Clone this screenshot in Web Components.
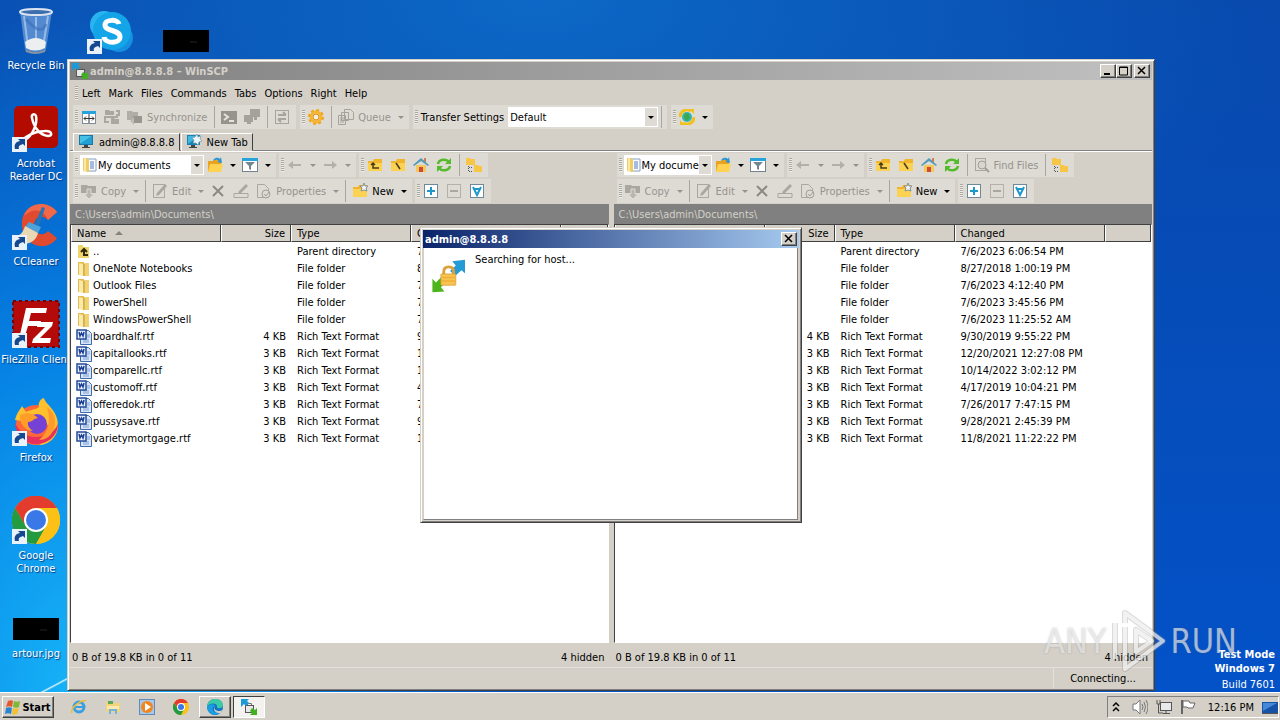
<!DOCTYPE html>
<html lang="en">
<head>
<meta charset="utf-8">
<title>admin@8.8.8.8 – WinSCP</title>
<style>
    html, body {
        height: 100%;
        margin: 0;
        overflow: hidden;
    }

    body {
        font: 11px/13px "DejaVu Sans Condensed", "DejaVu Sans", sans-serif;
        color: #000;
        --face: #d4d0c8;
        --tool: #dedbd5;
        --off: #96938c;
    }
</style>
</head>
<body>
<win-desktop></win-desktop>

<script>
const folder = '<path d="M1 4h5l1-2h8v12H1z" fill="#f0b52c"/><path d="M1 6h14v8H1z" fill="#fcd253"/>';
const shortcut = '<rect x="0" y="33" width="15" height="15" fill="#e9f2fa"/><path d="M3 45c-1-4 0-7 5-8l-2-2h7v7l-2-2c-3 1-5 2-4 5z" fill="#14488f"/>';

const icons = {
    winscp: '<rect x="4.500" y="6.500" width="8" height="7" fill="#e8e8e8" stroke="#555"/><path d="M6.500 6V4.500h4V6" fill="none" stroke="#777"/><path d="M0 0h8L6 2l2 2-3 3-2-2-3 3z" fill="#1c9bd8"/><path d="M16 16H9l2-2-2-2 2-3 3 2 2-2z" fill="#3eb021"/>',
    layout: '<rect x="1.500" y="2.500" width="13" height="12" fill="#fff" stroke="#7f8c96"/><path d="M1 2h14v3H1z" fill="#25a3dc"/><path d="M8 5v9M3 9.500h10M5 7.500l-2 2 2 2M11 7.500l2 2-2 2" fill="none" stroke="#333"/>',
    compare: '<path d="M1 1h4l1 1h4v4H1zM7 9h3l1 1h4v5H7z" fill="#aaa79f"/><path d="M12 2h3v4h-3M4 8H1v5h4M3 8h11" fill="none" stroke="#aaa79f" stroke-width="2"/>',
    sync: '<path d="M0 2h5l1 1h5v8H0z" fill="#b1aea7"/><path d="M6 7h9v7H5z" fill="#99968f"/><path d="M3 12l4-4v8z" fill="#bfbcb5"/>',
    console: '<rect y="2" width="16" height="13" fill="#96938c"/><path d="M3 5l4 3-4 3M8 12h5" fill="none" stroke="#e5e2dc" stroke-width="2"/>',
    hosts: '<path d="M6 0h10v8H6zM0 6h9v7H0zM3 13h4v2H3zM10 8h3v3h-3z" fill="#a5a29a"/>',
    swap: '<rect x="1.500" y="1.500" width="13" height="13" fill="none" stroke="#a7a49d"/><path d="M4 6h8M9 3l3 3M12 10H4M7 13l-3-3" fill="none" stroke="#a7a49d" stroke-width="2"/>',
    gear: '<circle cx="8" cy="8" r="5" fill="none" stroke="#f6b52e" stroke-width="3"/><circle cx="8" cy="8" r="7" fill="none" stroke="#f0a51c" stroke-width="2" stroke-dasharray="3 2.500"/><circle cx="8" cy="8" r="3" fill="#f8efd8" stroke="#d98f12"/>',
    queue: '<path d="M6.500.5h6l3 3v7h-9zM3.500 3.500h7v8h-7zM.5 6.500h7v9h-7z" fill="#dedbd5" stroke="#a5a29a"/><path d="M2 9h4M2 11h4M2 13h4" stroke="#a5a29a"/>',
    globe: '<circle cx="8" cy="8" r="5" fill="#2fb8b4"/><path d="M6 4l4 1 1 4-3 3-3-3z" fill="#3fa84a"/><path d="M1 8a7 7 0 0 1 11-6M15 8a7 7 0 0 1-11 6" fill="none" stroke="#f3c11f" stroke-width="3"/><path d="M10 0h5v5zM6 16H1v-5z" fill="#f3c11f"/>',
    monitor: '<rect x="1" y="1" width="14" height="10" fill="#1678ab"/><path d="M2 2h12L2 10z" fill="#48c0e6"/><path d="M2 10L14 2v8z" fill="#22a0d2"/><path d="M6 11h4v2h2v1H4v-1h2z" fill="#444"/>',
    newtab: '<rect x="1" y="1" width="13" height="10" fill="#1984b8"/><path d="M2 2h11L2 10z" fill="#3fb8e0"/><path d="M5 11h4v2h2v1H3v-1h2z" fill="#444"/><path d="M11 0l1 3 3-1-1 3 2 2-3 1-1 3-2-2-3 0 1-3-2-2 3-1z" fill="#e9f5fb" stroke="#7999a8" stroke-width=".7"/>',
    docs: '<path d="M5 2h9v12H5z" fill="#fbfcff" stroke="#84a0c0"/><path d="M8 5h4M8 7h4M8 9h4M8 11h4" stroke="#4e7dc3"/><path d="M1 1h4l2 2v12l-6-1z" fill="#f0cc66"/><path d="M3 1v13" stroke="#fae9a6" stroke-width="2"/>',
    open: '<path d="M1 4h5l1-1h7v11H1z" fill="#e8a41f"/><path d="M3 7h13l-2 8H1z" fill="#ffd252"/><path d="M6 4c1-4 5-4 7-2l1-2 1 6-5-1 2-1c-2-2-4-1-6 0z" fill="#2b94cf"/>',
    filter: '<rect x=".5" y="1.500" width="15" height="13" fill="#fff" stroke="#73828c"/><path d="M0 1h16v3H0z" fill="#26a3da"/><path d="M3 5h10L9 9v4l-2-1V9z" fill="#75858f"/>',
    back: '<path d="M1 8l5-4v3h8v2H6v3z" fill="#b3b0a9"/>',
    forward: '<path d="M15 8l-5-4v3H2v2h8v3z" fill="#b3b0a9"/>',
    up: folder + '<path d="M4 8l2-2 2 2M6 6v5h6" fill="none" stroke="#493a18" stroke-width="1.500"/>',
    root: folder + '<path d="M6 6l4 6" stroke="#493a18" stroke-width="1.500"/>',
    home: '<path d="M3 8h10v7H3z" fill="#f3c85c"/><path d="M11 1h2v4h-2z" fill="#d77b50"/><path d="M0 8l8-7 8 7-1 1-7-5-7 5z" fill="#4f9bb8"/><path d="M6 10h4v5H6z" fill="#cf4a32"/>',
    refresh: '<path d="M2 7a6 5 0 0 1 11-2M14 9a6 5 0 0 1-11 2" fill="none" stroke="#55bb2c" stroke-width="2.500"/><path d="M15 1v6H9zM1 15V9h6z" fill="#55bb2c"/>',
    tree: '<path d="M0 1h4l1 1h4v6H0zM8 8h4l1 1h4v6H8z" fill="#f8c646"/><path d="M2.500 9v6M3 14.500h4M3 10.500h4" stroke="#555" stroke-dasharray="1 1"/>',
    find: '<rect x="1.500" y="1.500" width="10" height="12" fill="none" stroke="#aaa79f"/><circle cx="8" cy="8" r="4" fill="#d9d6d0" stroke="#a09d96"/><path d="M11 11l4 4" stroke="#a09d96" stroke-width="2"/>',
    copy: '<path d="M0 2h6l1 1h8v7H0z" fill="#aaa79f"/><path d="M6 6h4v5h3l-5 5-5-5h3z" fill="#b9b6af" stroke="#dedbd5"/>',
    edit: '<rect x="1.500" y="1.500" width="11" height="13" fill="none" stroke="#aaa79f"/><path d="M4 13l1-3 8-9 2 2-8 9z" fill="#aaa79f"/>',
    remove: '<path d="M3 3l10 10M13 3L3 13" stroke="#8d8a83" stroke-width="2"/>',
    rename: '<path d="M1 10.500h14v4H1z" fill="none" stroke="#aaa79f"/><path d="M5 11l1-3 7-7 2 2-7 7z" fill="#aaa79f"/>',
    props: '<path d="M1.500 1.500h7l4 4v9h-11z" fill="none" stroke="#aaa79f"/><circle cx="10" cy="11" r="4" fill="#dedbd5" stroke="#a09d96"/><path d="M8 11l2 2 3-4" fill="none" stroke="#a09d96"/>',
    newfolder: folder + '<path d="M12 0l1 3 3 0-2 2 1 3-3-1-3 1 1-3-2-2h3z" fill="#eef4fa" stroke="#71808c" stroke-width=".8"/>',
    plus: '<rect x="1.500" y="1.500" width="13" height="13" fill="#fff" stroke="#708998"/><path d="M4 8h8M8 4v8" stroke="#1b98cd" stroke-width="2"/>',
    minus: '<rect x="1.500" y="1.500" width="13" height="13" fill="none" stroke="#b4b1aa"/><path d="M4 8h8" stroke="#aaa79f" stroke-width="2"/>',
    vee: '<rect x="1.500" y="1.500" width="13" height="13" fill="#fff" stroke="#708998"/><path d="M4 4l4 8 4-8M5 6h6" fill="none" stroke="#1b98cd" stroke-width="2"/>',
    parent: '<path d="M2 1h5v2h6v11H2z" fill="#efd56c"/><path d="M5 8l3-3 3 3M8 5v6h4" fill="none" stroke="#2f2a10" stroke-width="2"/>',
    dir: '<path d="M2 1h6v13H2z" fill="#e2bb4c"/><path d="M8 2h5v13H7z" fill="#f1d273"/><path d="M3 2l4 1v12l-4-1z" fill="#faeaa9"/><path d="M8 3v12" stroke="#c39a32"/>',
    rtf: '<path d="M4.500 1.500h8l3 3v11h-11z" fill="#d7e6fa" stroke="#3f68ad"/><path d="M7 11h6M7 13h6M11 6h3M11 8h3" stroke="#7e9fd2"/><rect x="1" y="1" width="9" height="9" fill="#eaf2ff" stroke="#234a97" stroke-width="1.500"/><path d="M3 3l1 4 1.500-3L7 7l1-4" fill="none" stroke="#1d3f91" stroke-width="1.500"/>',
    ie: '<circle cx="8" cy="8" r="5" fill="none" stroke="#3a9fe0" stroke-width="3"/><path d="M4 8h9" stroke="#3a9fe0" stroke-width="2"/><path d="M1 14C-1 9 10 0 15 2" fill="none" stroke="#e8bf3c" stroke-width="1.500"/>',
    explorer: '<path d="M1 3h5l1 1h8v9H1z" fill="#f2d47a"/><path d="M3 2h5v3H3z" fill="#58a95a"/><path d="M2 7h12v3H2z" fill="#fbeab0"/><path d="M4 15v-5h8v5h-2v-3H6v3z" fill="#71b4df"/>',
    player: '<rect x=".5" y=".5" width="15" height="15" fill="#a9c7e4" stroke="#5f8cba"/><circle cx="8" cy="8" r="6" fill="#f0861d"/><path d="M6 4l6 4-6 4z" fill="#fff"/>',
    chrome: '<circle cx="8" cy="8" r="8" fill="#fbc116"/><path d="M1 4a8 8 0 0 1 14 0H8L5 9z" fill="#e33b2e"/><path d="M1 4a8 8 0 0 0 7 12l3-6-5 1z" fill="#249a41"/><circle cx="8" cy="8" r="4" fill="#fff"/><circle cx="8" cy="8" r="3" fill="#3b78e7"/>',
    edge: '<circle cx="8" cy="8" r="8" fill="#1373c6"/><path d="M0 8C1-3 16-2 16 6c0 4-6 4-6 2 1-4-7-5-10 0z" fill="#3cc9a5"/><path d="M0 8c3-4 8-3 8-1-5 2-2 8 6 6-5 5-13 3-14-5z" fill="#1b9de2"/><path d="M8 7c-2 3 1 5 5 5l2-1-1 3c-5 1-9-3-6-7z" fill="#d4d0c8"/>',
    flag7: '<path d="M3 2c2-1 4-1 5 0L7 8C5 7 3 7 1 8z" fill="#e5572d"/><path d="M9 2c2 1 4 1 6 0l-1 6c-2 1-4 1-6 0z" fill="#7db934"/><path d="M1 9c2-1 4-1 6 0l-1 6c-2-1-4-1-6 0z" fill="#2a83cf"/><path d="M8 9c2 1 4 1 6 0l-2 6c-2 1-4 1-5 0z" fill="#f5c12b"/>',
    more: '<path d="M5 7l3-3 3 3M5 12l3-3 3 3" fill="none" stroke="#000" stroke-width="1.500"/>',
    sound: '<path d="M1 5h3l4-4v14l-4-4H1z" fill="#fff" stroke="#777"/><path d="M10 5q2 3 0 6M12 3q3 5 0 10M14 1q4 7 0 14" fill="none" stroke="#777"/>',
    network: '<rect x="4.500" y="3.500" width="11" height="8" fill="#e9e9e9" stroke="#555"/><path d="M7 14.500h7M10 12v2M1 1v4h3V1M2.500 5v9H7" fill="none" stroke="#555"/>',
    flag: '<path d="M2 1v14" stroke="#666" stroke-width="2"/><path d="M3 2h6l1 2h5l-2 5H8L7 8H3z" fill="#fff" stroke="#666"/>',
    show: '<rect x="0" y="3" width="16" height="11" fill="#1652a6"/><path d="M1 4h14L1 12z" fill="#4788d8"/><path d="M0 14h16v1H0z" fill="#555"/>'
};

// 48px artwork for the desktop and the progress dialog
const pictures = {
    bin: '<path d="M8 5l5 38q11 6 21 0l6-38z" fill="#8fb6e6" fill-opacity=".55"/><path d="M12 10l4 31M36 10l-5 31M24 11v32" stroke="#dceafb" stroke-opacity=".5" stroke-width="2"/><path d="M13 36q11-8 21 0l-1 6q-10 5-19 0z" fill="#eceef0"/><path d="M13 43q11 6 21 0l-1 3q-10 4-19 0z" fill="#8693a0"/><ellipse cx="24" cy="6" rx="16" ry="3" fill="#3c6fae" stroke="#dbe4ef" stroke-width="2"/><path d="M14 13q15 18 20 5" fill="none" stroke="#396fb8" stroke-opacity=".6" stroke-width="3"/>',
    acrobat: '<rect x="2" y="2" width="44" height="42" rx="5" fill="#b30b00"/><path d="M13 36c6-3 13-15 11-24-1-3-5-2-4 2 2 10 8 17 16 18 5 0 4-5-2-5-9 0-14 2-20 6-4 3-4 5-1 3z" fill="none" stroke="#fff" stroke-width="2.500"/>' + shortcut,
    ccleaner: '<path d="M45 10C36-2 8 0 10 24c2 22 26 26 35 12l-9-7c-5 6-14 3-14-5 0-10 9-12 14-6z" fill="#e04a2e"/><path d="M45 10C36-2 16 0 12 14c8-8 19-8 24 4z" fill="#f2694a"/><path d="M30 5l3 1-6 18-4-2z" fill="#2573b8"/><path d="M17 20l12 5-3 6-13-6z" fill="#4ea2d9"/><path d="M13 24l13 7c-2 9-10 12-20 11L2 34c7 0 9-4 11-10z" fill="#ead8b5"/>' + shortcut,
    filezilla: '<rect x="1" y="1" width="46" height="46" fill="#b40a0a" stroke="#700" stroke-width="2" stroke-dasharray="3 3"/><path d="M14 8h21l-1 5H19l-2 8h12l-1 5H16l-4 13H7z" fill="#fff"/><path d="M26 22h15l-1 4-12 12h11l-1 5H20l1-4 12-12h-8z" fill="#fff"/>' + shortcut,
    firefox: '<circle cx="24" cy="27" r="20" fill="#ff6638"/><path d="M3 22C5 14 8 12 10 8l4 6c6-3 9-2 13-5-1-4 1-8 5-9 1 6 14 12 14 27 0 12-9 20-19 20 9-4 13-11 11-20z" fill="#ffc02e"/><path d="M46 25c0 14-11 21-22 21S4 38 3 25c4 8 10 14 21 14s20-6 22-14z" fill="#e62f5c"/><path d="M35 9c8 6 10 14 6 24-3 6-8 9-14 9 10-8 12-20 8-33z" fill="#ff9a2d"/><circle cx="25" cy="26" r="10" fill="#7542d5"/><path d="M8 17c7-3 13-2 18 3-6 1-5 4-10 4-1 4 2 7 5 9-8 0-14-8-13-16z" fill="#ff9d29"/>' + shortcut,
    chrome: '<circle cx="24" cy="24" r="24" fill="#fbc116"/><path d="M3 12a24 24 0 0 1 42 0H24L13 29z" fill="#e33b2e"/><path d="M3 12a24 24 0 0 0 21 36l11-18-20 2z" fill="#249a41"/><path d="M24 48l10-18 1-18h10a24 24 0 0 1-21 36z" fill="#fbc116"/><circle cx="24" cy="24" r="12" fill="#fff"/><circle cx="24" cy="24" r="10" fill="#3b78e7"/>' + shortcut,
    skype: '<circle cx="17" cy="19" r="14" fill="#29b4ef"/><circle cx="32" cy="32" r="14" fill="#158fe0"/><circle cx="25" cy="25" r="19" fill="#14a5e8"/><path d="M32 18c-1-5-14-5-14 1 0 7 15 4 15 12 0 7-15 7-16 0" fill="none" stroke="#fff" stroke-width="5"/>' + shortcut,
    thumb: '<path d="M1 24h46v22H1z"/><path d="M28 36h7" stroke="#222"/>',
    transfer: '<path d="M48 1v19l-5-4-9 8-7-7 8-8-5-6z" fill="#249bd4"/><path d="M2 47V28l5 5 8-8 7 7-8 8 5 6z" fill="#4cb51d"/><path d="M18 22v-4q0-7 7-7t7 7v4" fill="none" stroke="#d9a23a" stroke-width="4"/><rect x="14" y="21" width="21" height="16" rx="1" fill="#f8c451" stroke="#d9962a"/><path d="M15 26h19M15 31h19" stroke="#f0ae37" stroke-width="2"/>'
};

class UiIcon extends HTMLElement {
    connectedCallback() {
        const name = this.getAttribute('name');
        const big = this.hasAttribute('picture');
        const box = big ? 48 : 16;
        this.attachShadow({mode: 'open'}).innerHTML = `
            <style>
                :host { display: block; flex: none; width: 16px; height: 16px; }
                svg { display: block; width: 100%; height: 100%; }
            </style>
            <svg viewBox="0 0 ${box} ${box}" aria-hidden="true">${(big ? pictures : icons)[name]}</svg>`;
    }
}

class DesktopIcon extends HTMLElement {
    connectedCallback() {
        this.attachShadow({mode: 'open'}).innerHTML = `
            <style>
                :host {
                    display: flex;
                    flex-direction: column;
                    align-items: center;
                    gap: 5px;
                    height: 98px;
                    color: #fff;
                    text-align: center;
                    text-shadow: 1px 1px 1px #003a80;
                    white-space: nowrap;
                }
                ui-icon { width: 48px; height: 48px; }
            </style>
            <ui-icon picture name="${this.getAttribute('name')}"></ui-icon>
            <slot></slot>`;
    }
}

class ToolButton extends HTMLElement {
    connectedCallback() {
        const icon = this.getAttribute('icon');
        const off = this.hasAttribute('off');
        this.attachShadow({mode: 'open'}).innerHTML = `
            <style>
                :host { display: block; }
                button {
                    display: flex;
                    align-items: center;
                    height: 24px;
                    padding: 0;
                    border: 0;
                    background: none;
                    font: inherit;
                    color: #000;
                    white-space: nowrap;
                }
                button:disabled { color: var(--off); }
                ui-icon { margin: 0 4px 0 3px; }
                .label { padding-right: 4px; }
                .menu { width: 12px; display: flex; justify-content: center; }
                .menu::after {
                    content: "";
                    border: 3px solid transparent;
                    border-top-color: currentColor;
                    border-bottom: 0;
                }
            </style>
            <button type="button" aria-label="${this.getAttribute('label') || icon}" ${off ? 'disabled' : ''}>
                <ui-icon name="${icon}"></ui-icon>
                ${this.hasAttribute('label') ? `<span class="label">${this.getAttribute('label')}</span>` : ''}
                ${this.hasAttribute('menu') ? '<span class="menu"></span>' : ''}
            </button>`;
    }
}

class ToolBar extends HTMLElement {
    connectedCallback() {
        this.attachShadow({mode: 'open'}).innerHTML = `
            <style>
                :host {
                    display: flex;
                    align-items: center;
                    height: 24px;
                    padding-right: 2px;
                    background: var(--tool);
                }
                .grip {
                    width: 3px;
                    height: 14px;
                    margin-left: 2px;
                    background: repeating-linear-gradient(#aaa79f 0 1px, #efedea 1px 2px);
                }
                ::slotted(hr) {
                    width: 1px;
                    height: 22px;
                    margin: 0 3px;
                    border: 0;
                    background: #a9a69f;
                }
            </style>
            <span class="grip"></span>
            <slot></slot>`;
    }
}

class ComboBox extends HTMLElement {
    connectedCallback() {
        const icon = this.getAttribute('icon');
        this.attachShadow({mode: 'open'}).innerHTML = `
            <style>
                :host {
                    display: flex;
                    align-items: center;
                    box-sizing: border-box;
                    height: 20px;
                    margin-left: 2px;
                    padding-left: 1px;
                    border: 1px solid #fff;
                    background: #fff;
                }
                select {
                    flex: 1;
                    min-width: 0;
                    height: 18px;
                    padding: 0;
                    border: 0;
                    appearance: none;
                    background: none;
                    font: inherit;
                    color: #000;
                }
                .drop {
                    display: flex;
                    align-items: center;
                    justify-content: center;
                    width: 12px;
                    height: 18px;
                    background: var(--tool);
                }
                .drop::after {
                    content: "";
                    border: 3px solid transparent;
                    border-top-color: #000;
                    border-bottom: 0;
                }
            </style>
            ${icon ? `<ui-icon name="${icon}"></ui-icon>` : ''}
            <select aria-label="${this.getAttribute('label')}"><option>${this.getAttribute('value')}</option></select>
            <span class="drop"></span>`;
    }
}

class WinButton extends HTMLElement {
    connectedCallback() {
        const shapes = {
            minimize: '<path d="M3 8h6v2H3z"/>',
            maximize: '<path d="M2.500 2h8v8h-8zM2 2.500h9" fill="none" stroke="#000"/>',
            close: '<path d="M3 2l7 7M10 2L3 9" fill="none" stroke="#000" stroke-width="1.500"/>'
        };
        const kind = this.getAttribute('kind');
        this.attachShadow({mode: 'open'}).innerHTML = `
            <style>
                :host { display: block; }
                button {
                    display: block;
                    width: 16px;
                    height: 14px;
                    padding: 0;
                    border: 1px solid;
                    border-color: #fff #404040 #404040 #fff;
                    box-shadow: inset -1px -1px #808080;
                    background: var(--face);
                }
                svg { display: block; width: 13px; height: 12px; }
            </style>
            <button type="button" aria-label="${kind}"><svg viewBox="0 0 13 12">${shapes[kind]}</svg></button>`;
    }
}

class WinFrame extends HTMLElement {
    connectedCallback() {
        this.attachShadow({mode: 'open'}).innerHTML = `
            <style>
                :host {
                    display: flex;
                    flex-direction: column;
                    box-sizing: border-box;
                    padding: 2px;
                    border: 1px solid;
                    border-color: #d4d0c8 #404040 #404040 #d4d0c8;
                    box-shadow: inset 1px 1px #fff, inset -1px -1px #808080;
                    background: var(--face);
                }
                header {
                    display: flex;
                    align-items: center;
                    flex: none;
                    gap: 2px;
                    height: 18px;
                    padding: 0 2px;
                    background: linear-gradient(90deg, var(--bar-from), var(--bar-to));
                    color: var(--bar-text);
                }
                h1 { flex: 1; margin: 0; font: inherit; font-weight: bold; }
                .buttons { display: flex; }
                win-button[kind=close] { margin-left: 2px; }
            </style>
            <header>
                <slot name="icon"></slot>
                <h1>${this.getAttribute('caption')}</h1>
                <div class="buttons">
                    ${this.getAttribute('buttons').split(' ').map(kind => `<win-button kind="${kind}"></win-button>`).join('')}
                </div>
            </header>
            <slot></slot>`;
    }
}

const files = [
    ['parent', '..', '', 'Parent directory', '7/6/2023 6:06:54 PM'],
    ['dir', 'OneNote Notebooks', '', 'File folder', '8/27/2018 1:00:19 PM'],
    ['dir', 'Outlook Files', '', 'File folder', '7/6/2023 4:12:40 PM'],
    ['dir', 'PowerShell', '', 'File folder', '7/6/2023 3:45:56 PM'],
    ['dir', 'WindowsPowerShell', '', 'File folder', '7/6/2023 11:25:52 AM'],
    ['rtf', 'boardhalf.rtf', '4 KB', 'Rich Text Format', '9/30/2019 9:55:22 PM'],
    ['rtf', 'capitallooks.rtf', '3 KB', 'Rich Text Format', '12/20/2021 12:27:08 PM'],
    ['rtf', 'comparellc.rtf', '3 KB', 'Rich Text Format', '10/14/2022 3:02:12 PM'],
    ['rtf', 'customoff.rtf', '3 KB', 'Rich Text Format', '4/17/2019 10:04:21 PM'],
    ['rtf', 'offeredok.rtf', '3 KB', 'Rich Text Format', '7/26/2017 7:47:15 PM'],
    ['rtf', 'pussysave.rtf', '3 KB', 'Rich Text Format', '9/28/2021 2:45:39 PM'],
    ['rtf', 'varietymortgage.rtf', '3 KB', 'Rich Text Format', '11/8/2021 11:22:22 PM']
];

class FileTable extends HTMLElement {
    connectedCallback() {
        this.attachShadow({mode: 'open'}).innerHTML = `
            <style>
                :host {
                    display: block;
                    overflow: hidden;
                    border: 1px solid;
                    border-color: #404040 #fff #fff #404040;
                    background: #fff;
                }
                table { width: 100%; table-layout: fixed; border-collapse: separate; border-spacing: 0; }
                th {
                    height: 16px;
                    padding: 0 5px;
                    border: 1px solid;
                    border-color: #fff #404040 #404040 #fff;
                    border-top: 0;
                    background: var(--face);
                    font-weight: normal;
                    text-align: left;
                }
                td { height: 17px; padding: 0 0 0 6px; white-space: nowrap; }
                tbody::before { content: ""; display: block; height: 1px; }
                .size { padding: 0 5px 0 0; text-align: right; }
                .file { display: flex; align-items: center; gap: 1px; margin-left: -1px; height: 17px; }
                .sort {
                    display: inline-block;
                    margin-left: 6px;
                    vertical-align: 2px;
                    border: 4px solid transparent;
                    border-bottom-color: #86837c;
                    border-top: 0;
                }
            </style>
            <table>
                <colgroup><col width="150"><col width="70"><col width="120"><col width="150"><col></colgroup>
                <thead>
                    <tr><th>Name <i class="sort"></i></th><th class="size">Size</th><th>Type</th><th>Changed</th><th></th></tr>
                </thead>
                <tbody>
                    ${files.map(([icon, name, size, type, changed]) => `
                    <tr>
                        <td><div class="file"><ui-icon name="${icon}"></ui-icon><span>${name}</span></div></td>
                        <td class="size">${size}</td>
                        <td>${type}</td>
                        <td>${changed}</td>
                        <td></td>
                    </tr>`).join('')}
                </tbody>
            </table>`;
    }
}

class FilePanel extends HTMLElement {
    connectedCallback() {
        const find = this.hasAttribute('find');
        this.attachShadow({mode: 'open'}).innerHTML = `
            <style>
                :host { display: flex; flex-direction: column; flex: 1; min-width: 0; }
                .bars { display: flex; gap: 3px; padding: 1px 0 1px 3px; }
                combo-box { width: ${find ? 88 : 124}px; }
                .path {
                    height: 20px;
                    padding: 0 5px;
                    background: #808080;
                    color: #d4d0c8;
                    line-height: 21px;
                }
                file-table { flex: 1; min-height: 0; }
                footer { display: flex; justify-content: space-between; padding: 8px 4px 3px 2px; }
            </style>
            <div class="bars">
                <tool-bar>
                    <combo-box icon="docs" label="Drive" value="My documents"></combo-box>
                    <tool-button icon="open" menu></tool-button>
                    <tool-button icon="filter" menu></tool-button>
                </tool-bar>
                <tool-bar>
                    <tool-button icon="back" off menu></tool-button>
                    <tool-button icon="forward" off menu></tool-button>
                </tool-bar>
                <tool-bar>
                    <tool-button icon="up"></tool-button>
                    <tool-button icon="root"></tool-button>
                    <tool-button icon="home"></tool-button>
                    <tool-button icon="refresh"></tool-button>
                    <hr>
                    ${find ? '<tool-button icon="find" label="Find Files" off></tool-button><hr>' : ''}
                    <tool-button icon="tree"></tool-button>
                </tool-bar>
            </div>
            <div class="bars">
                <tool-bar>
                    <tool-button icon="copy" label="Copy" off menu></tool-button>
                    <hr>
                    <tool-button icon="edit" label="Edit" off menu></tool-button>
                    <tool-button icon="remove" off></tool-button>
                    <tool-button icon="rename" off></tool-button>
                    <tool-button icon="props" label="Properties" off menu></tool-button>
                    <hr>
                    <tool-button icon="newfolder" label="New" menu></tool-button>
                </tool-bar>
                <tool-bar>
                    <tool-button icon="plus"></tool-button>
                    <tool-button icon="minus" off></tool-button>
                    <tool-button icon="vee"></tool-button>
                </tool-bar>
            </div>
            <div class="path">C:\\Users\\admin\\Documents\\</div>
            <file-table></file-table>
            <footer><span>0 B of 19.8 KB in 0 of 11</span><span>4 hidden</span></footer>`;
    }
}

class SessionTab extends HTMLElement {
    connectedCallback() {
        this.attachShadow({mode: 'open'}).innerHTML = `
            <style>
                :host { display: block; }
                button {
                    display: flex;
                    align-items: center;
                    gap: 5px;
                    height: 18px;
                    padding: 0 4px;
                    border: 1px solid;
                    border-color: #fff #404040 transparent #fff;
                    background: var(--face);
                    font: inherit;
                    color: #000;
                }
            </style>
            <button type="button"><ui-icon name="${this.getAttribute('icon')}"></ui-icon><slot></slot></button>`;
    }
}

class ScpWindow extends HTMLElement {
    connectedCallback() {
        const menus = ['Left', 'Mark', 'Files', 'Commands', 'Tabs', 'Options', 'Right', 'Help'];
        this.attachShadow({mode: 'open'}).innerHTML = `
            <style>
                :host { display: flex; }
                win-frame.main {
                    flex: 1;
                    min-width: 0;
                    --bar-from: #808080;
                    --bar-to: #c0c0c0;
                    --bar-text: #d4d0c8;
                }
                nav { display: flex; align-items: center; height: 25px; padding-left: 5px; }
                nav i {
                    width: 3px;
                    height: 14px;
                    background: repeating-linear-gradient(#aaa79f 0 1px, #efedea 1px 2px);
                }
                nav button { padding: 2px 4px 0; border: 0; background: none; font: inherit; color: #000; }
                .bars { display: flex; gap: 4px; padding-left: 3px; }
                .bars span { padding: 0 2px 0 3px; white-space: nowrap; }
                combo-box { width: 150px; }
                .tabs {
                    display: flex;
                    gap: 1px;
                    padding: 4px 3px 0;
                    border-bottom: 1px solid #fff;
                    box-shadow: inset 0 -1px #808080;
                }
                .panels { display: flex; flex: 1; gap: 5px; min-height: 0; }
                .state { display: flex; justify-content: flex-end; border-top: 1px solid #e4e1dc; }
                .state span { width: 98px; padding: 4px 0 3px; border-left: 1px solid #e4e1dc; text-align: center; }
                win-frame.progress {
                    position: absolute;
                    inset: 0;
                    width: 382px;
                    height: 296px;
                    margin: auto;
                    --bar-from: #0a246a;
                    --bar-to: #a6caf0;
                    --bar-text: #fff;
                }
                .body {
                    display: flex;
                    align-items: flex-start;
                    flex: 1;
                    gap: 10px;
                    padding: 5px 7px;
                    margin-right: 1px;
                    border: 1px solid #808080;
                    border-width: 0 1px 1px;
                    border-left-color: #d4d0c8;
                    background: #fff;
                }
                .body ui-icon { width: 34px; height: 34px; margin-top: 6px; }
            </style>
            <win-frame class="main" caption="admin@8.8.8.8 – WinSCP" buttons="minimize maximize close">
                <ui-icon slot="icon" name="winscp"></ui-icon>
                <nav><i></i>${menus.map(menu => `<button type="button">${menu}</button>`).join('')}</nav>
                <div class="bars">
                    <tool-bar>
                        <tool-button icon="layout"></tool-button>
                        <tool-button icon="compare" off></tool-button>
                        <tool-button icon="sync" label="Synchronize" off></tool-button>
                        <hr>
                        <tool-button icon="console" off></tool-button>
                        <tool-button icon="hosts" off></tool-button>
                        <hr>
                        <tool-button icon="swap" off></tool-button>
                    </tool-bar>
                    <tool-bar>
                        <tool-button icon="gear"></tool-button>
                        <hr>
                        <tool-button icon="queue" label="Queue" off menu></tool-button>
                    </tool-bar>
                    <tool-bar>
                        <span>Transfer Settings</span>
                        <combo-box label="Transfer Settings" value="Default"></combo-box>
                        <hr>
                    </tool-bar>
                    <tool-bar>
                        <tool-button icon="globe" menu></tool-button>
                    </tool-bar>
                </div>
                <div class="tabs">
                    <session-tab icon="monitor">admin@8.8.8.8</session-tab>
                    <session-tab icon="newtab">New Tab</session-tab>
                </div>
                <div class="panels">
                    <file-panel></file-panel>
                    <file-panel find></file-panel>
                </div>
                <div class="state"><span>Connecting...</span></div>
            </win-frame>
            <win-frame class="progress" caption="admin@8.8.8.8" buttons="close">
                <div class="body">
                    <ui-icon picture name="transfer"></ui-icon>
                    <span>Searching for host...</span>
                </div>
            </win-frame>`;
    }
}

class TaskBar extends HTMLElement {
    connectedCallback() {
        this.attachShadow({mode: 'open'}).innerHTML = `
            <style>
                :host {
                    display: flex;
                    align-items: center;
                    box-sizing: border-box;
                    height: 28px;
                    padding: 1px 1px 0 2px;
                    border-top: 1px solid #fff;
                    background: var(--face);
                }
                button { padding: 0; border: 0; background: none; font: inherit; color: #000; }
                .start, .task {
                    display: flex;
                    align-items: center;
                    justify-content: center;
                    height: 22px;
                    box-sizing: border-box;
                    border: 1px solid;
                    border-color: #fff #404040 #404040 #fff;
                    box-shadow: inset -1px -1px #808080;
                }
                .start { gap: 1px; width: 52px; font-weight: bold; }
                .quick { display: flex; gap: 18px; padding: 0 10px 0 17px; }
                .task { width: 32px; margin-right: 2px; }
                .pressed {
                    border-color: #404040 #fff #fff #404040;
                    box-shadow: none;
                    background: #f4f2ef;
                }
                .tray {
                    display: flex;
                    align-items: center;
                    gap: 8px;
                    height: 20px;
                    margin-left: auto;
                    border: 1px solid;
                    border-color: #808080 #fff #fff #808080;
                }
                time { margin-left: 4px; }
            </style>
            <button class="start" type="button"><ui-icon name="flag7"></ui-icon>Start</button>
            <div class="quick">
                ${['ie', 'explorer', 'player', 'chrome'].map(name => `<button type="button" aria-label="${name}"><ui-icon name="${name}"></ui-icon></button>`).join('')}
            </div>
            <button class="task" type="button" aria-label="Edge"><ui-icon name="edge"></ui-icon></button>
            <button class="task pressed" type="button" aria-label="WinSCP"><ui-icon name="winscp"></ui-icon></button>
            <div class="tray">
                <ui-icon name="more"></ui-icon>
                <ui-icon name="sound"></ui-icon>
                <ui-icon name="network"></ui-icon>
                <ui-icon name="flag"></ui-icon>
                <time>12:16 PM</time>
                <ui-icon name="show"></ui-icon>
            </div>`;
    }
}

class AnyRun extends HTMLElement {
    connectedCallback() {
        this.attachShadow({mode: 'open'}).innerHTML = `
            <style>
                :host {
                    display: flex;
                    align-items: center;
                    gap: 3px;
                    font-size: 34px;
                    line-height: 40px;
                    color: rgba(255, 255, 255, .6);
                    text-shadow: 0 0 2px rgba(90, 90, 90, .4);
                    pointer-events: none;
                }
                svg { width: 58px; height: 62px; }
            </style>
            <span>ANY</span>
            <svg viewBox="0 0 58 62" fill="none" stroke-linejoin="round">
                <g stroke="#888" stroke-opacity=".3" stroke-width="6"><path d="M16 13v-10l38 28-38 28V17M27 20v22l16-11zM6 13v36"/></g>
                <g stroke="#fff" stroke-opacity=".65" stroke-width="4"><path d="M16 13v-10l38 28-38 28V17M27 20v22l16-11zM6 13v36"/></g>
            </svg>
            <span>RUN</span>`;
    }
}

class WinDesktop extends HTMLElement {
    connectedCallback() {
        this.attachShadow({mode: 'open'}).innerHTML = `
            <style>
                :host { display: flex; flex-direction: column; height: 100%; }
                main {
                    position: relative;
                    flex: 1;
                    min-height: 0;
                    overflow: hidden;
                    background:
                        linear-gradient(152deg, transparent 46%, rgba(255, 255, 255, .8) 50%, transparent 56%) 40px 100% / 34px 16px no-repeat,
                        radial-gradient(ellipse 420px 680px at 80px 100%, #17b4f8, rgba(6, 140, 236, .85) 50%, transparent),
                        radial-gradient(ellipse 60% 50% at 42% 0, #0c68c6, transparent),
                        linear-gradient(#0848ac, #0352c8);
                }
                .icons { display: flex; gap: 3px; padding-top: 6px; }
                .icons div { width: 72px; }
                scp-window { position: absolute; inset: 59px 125px 1px 67px; }
                .build { position: absolute; right: 5px; bottom: 0; color: #fff; text-align: right; line-height: 14px; }
                .build p { margin: 2px 0 0; }
                any-run { position: absolute; right: 43px; bottom: 20px; }
            </style>
            <main>
                <div class="icons">
                    <div>
                        <desktop-icon name="bin">Recycle Bin</desktop-icon>
                        <desktop-icon name="acrobat"><span>Acrobat<br>Reader DC</span></desktop-icon>
                        <desktop-icon name="ccleaner">CCleaner</desktop-icon>
                        <desktop-icon name="filezilla">FileZilla Client</desktop-icon>
                        <desktop-icon name="firefox">Firefox</desktop-icon>
                        <desktop-icon name="chrome"><span>Google<br>Chrome</span></desktop-icon>
                        <desktop-icon name="thumb">artour.jpg</desktop-icon>
                    </div>
                    <div><desktop-icon name="skype"></desktop-icon></div>
                    <div><desktop-icon name="thumb"></desktop-icon></div>
                </div>
                <scp-window></scp-window>
                <div class="build"><p><b>Test Mode<br>Windows 7</b></p><p>Build 7601</p></div>
                <any-run></any-run>
            </main>
            <task-bar></task-bar>`;
    }
}

customElements.define('ui-icon', UiIcon);
customElements.define('desktop-icon', DesktopIcon);
customElements.define('tool-button', ToolButton);
customElements.define('tool-bar', ToolBar);
customElements.define('combo-box', ComboBox);
customElements.define('win-button', WinButton);
customElements.define('win-frame', WinFrame);
customElements.define('file-table', FileTable);
customElements.define('file-panel', FilePanel);
customElements.define('session-tab', SessionTab);
customElements.define('scp-window', ScpWindow);
customElements.define('task-bar', TaskBar);
customElements.define('any-run', AnyRun);
customElements.define('win-desktop', WinDesktop);
</script>
</body>
</html>
